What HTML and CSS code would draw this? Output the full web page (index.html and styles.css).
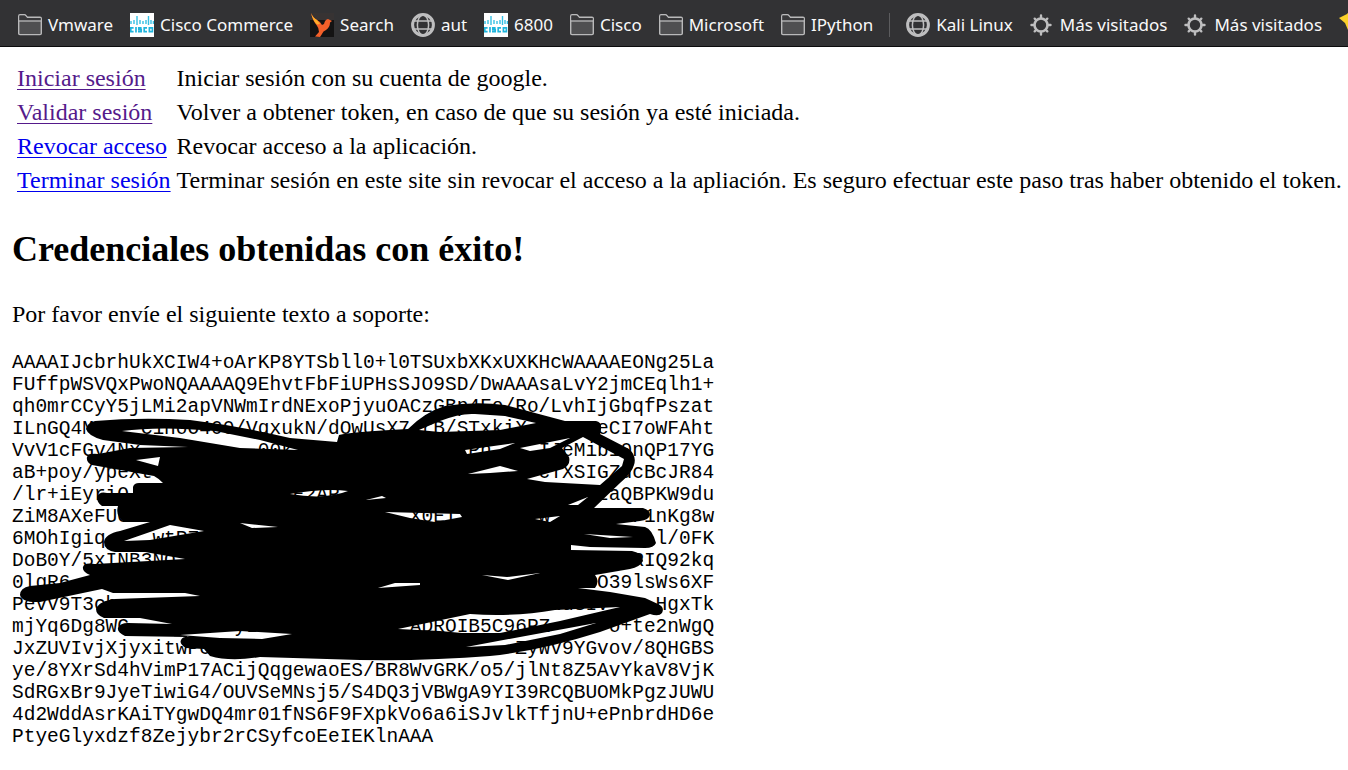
FILE: index.html
```
<!DOCTYPE html>
<html lang="es">
<head>
<meta charset="utf-8">
<title>Credenciales</title>
<link rel="stylesheet" href="styles.css">
</head>
<body>
<svg class="defs" aria-hidden="true">
  <symbol id="folder" viewBox="0 0 24 24">
    <path d="M.7 20.5V3.2Q.7 1.8 2 1.8H6.5Q7.3 1.8 8 2.6L9.3 4.2H22Q23.3 4.2 23.3 5.5V20.5Q23.3 21.6 22 21.6H2Q.7 21.6.7 20.5Z" fill="#4f4f51" stroke="#b9b9ba" stroke-width="1.4"/>
    <path d="M1.4 2.6H6.6L9 5H22.6V7.4H1.4Z" fill="#38383a"/>
    <path d="M1 8H23" stroke="#b9b9ba" stroke-width="1.3"/>
  </symbol>
  <symbol id="globe" viewBox="0 0 24 24">
    <g fill="none" stroke="#bebebf"><circle cx="12" cy="12" r="10.4" stroke-width="3"/>
    <ellipse cx="12" cy="12" rx="5.6" ry="10" stroke-width="1.5"/><path d="M2.5 8H21.5M2.5 16H21.5" stroke-width="1.5"/></g>
  </symbol>
  <symbol id="gear" viewBox="0 0 24 24">
    <g fill="none" stroke="#bebebf" stroke-linecap="round"><circle cx="11" cy="12" r="6.500" stroke-width="2.600"/>
    <path d="M11 2.500V5M11 19V21.500M1.500 12H4M18 12H20.500M4.700 5.700L6 7M16 17L17.300 18.300M4.700 18.300L6 17M16 7L17.300 5.700" stroke-width="2.400"/></g>
  </symbol>
  <symbol id="cisco" viewBox="0 0 24 24">
    <path d="M0 0H24V24H0Z" fill="#fff"/>
    <path d="M1 8V11M4 7V11M7 3V12M10 7V11M13 8V11M16 7V11M18.500 3V12M21 7V11M23.400 8V11" stroke="#35bfe3" stroke-width="1.4"/>
    <path d="M3.6 14.8H.8V18.6H3.6M6 14V19.4M11.600 14.8H8.8V16.7H11.200V18.6H8M17 14.8H14.2V18.6H17M19.4 14.8H22.4V18.6H19.4Z" fill="none" stroke="#1fb4dc" stroke-width="1.7"/>
  </symbol>
  <symbol id="bird" viewBox="0 0 24 24">
    <path d="M0 0H24V24H0Z" fill="#141313"/><path d="M0 0H24V7H0Z" fill="#373333"/>
    <path d="M1 0Q3 5 7 7Q11 9 12 12L14 11Q15 6.500 18 6L22 8L20 9.500Q20 14 16 17Q13 18 12 21L10 24L5 23.500L9 19Q9 15 6.500 12Q3 8 1 0Z" fill="#f4602a"/>
    <path d="M1 0Q3 5 7 7L10 11L7 11.500Q3 8 1 0Z" fill="#ffae28"/>
  </symbol>
  <symbol id="star" viewBox="0 0 24 24"><path d="M0 5L8 1L12 -4V24L6 10Z" fill="#fcd12a"/></symbol>
</svg>

<nav class="bookmarks" aria-label="Marcadores">
  <button class="bookmark"><svg class="icon"><use href="#folder"/></svg>Vmware</button>
  <a class="bookmark" href="#"><svg class="icon"><use href="#cisco"/></svg>Cisco Commerce</a>
  <a class="bookmark" href="#"><svg class="icon"><use href="#bird"/></svg>Search</a>
  <a class="bookmark" href="#"><svg class="icon"><use href="#globe"/></svg>aut</a>
  <a class="bookmark" href="#"><svg class="icon"><use href="#cisco"/></svg>6800</a>
  <button class="bookmark"><svg class="icon"><use href="#folder"/></svg>Cisco</button>
  <button class="bookmark"><svg class="icon"><use href="#folder"/></svg>Microsoft</button>
  <button class="bookmark"><svg class="icon"><use href="#folder"/></svg>IPython</button>
  <span class="separator"></span>
  <a class="bookmark" href="#"><svg class="icon"><use href="#globe"/></svg>Kali Linux</a>
  <button class="bookmark"><svg class="icon"><use href="#gear"/></svg>Más visitados</button>
  <button class="bookmark"><svg class="icon"><use href="#gear"/></svg>Más visitados</button>
  <a class="bookmark" href="#" aria-label="Favoritos"><svg class="icon"><use href="#star"/></svg></a>
</nav>

<main class="content">
  <table class="actions">
    <tr><td><a class="link visited" href="#">Iniciar sesión</a></td><td>Iniciar sesión con su cuenta de google.</td></tr>
    <tr><td><a class="link visited" href="#">Validar sesión</a></td><td>Volver a obtener token, en caso de que su sesión ya esté iniciada.</td></tr>
    <tr><td><a class="link" href="#">Revocar acceso</a></td><td>Revocar acceso a la aplicación.</td></tr>
    <tr><td><a class="link" href="#">Terminar sesión</a></td><td>Terminar sesión en este site sin revocar el acceso a la apliación. Es seguro efectuar este paso tras haber obtenido el token.</td></tr>
  </table>
  <h2 class="title">Credenciales obtenidas con éxito!</h2>
  <p class="hint">Por favor envíe el siguiente texto a soporte:</p>
  <div class="token">
<pre class="token-text">AAAAIJcbrhUkXCIW4+oArKP8YTSbll0+l0TSUxbXKxUXKHcWAAAAEONg25La
FUffpWSVQxPwoNQAAAAQ9EhvtFbFiUPHsSJO9SD/DwAAAsaLvY2jmCEqlh1+
qh0mrCCyY5jLMi2apVNWmIrdNExoPjyuOACzGBp4Fo/Ro/LvhIjGbqfPszat
ILnGQ4M    C1hoO400/VqxukN/dOwUsX7 rB/STxkiX      eCI7oWFAht
VvV1cFGv4Nx          00k               Ph    IJeMib10nQP17YG
aB+poy/ypeXt                                 cTXSIGZdcBcJR84
/lr+iEyriO              E2AP                      zaQBPKW9du
ZiM8AXeFUC                        X0EI       W       F1nKg8w
6MOhIgiq    wtPZ                                       l/0FK
DoB0Y/5xINB3NO                                       RIQ92kq
0lgR6                                             O39lsWs6XF
PeVV9T3ch                                     wuSIV    HgxTk
mjYq6Dg8WC         yLs            ADROIB5C96PZ     o+te2nWgQ
JxZUVIvjXjyxitwPc                          ZyWV9YGvov/8QHGBS
ye/8YXrSd4hVimP17ACijQqgewaoES/BR8WvGRK/o5/jlNt8Z5AvYkaV8VjK
SdRGxBr9JyeTiwiG4/OUVSeMNsj5/S4DQ3jVBWgA9YI39RCQBUOMkPgzJUWU
4d2WddAsrKAiTYgwDQ4mr01fNS6F9FXpkVo6a6iSJvlkTfjnU+ePnbrdHD6e
PtyeGlyxdzf8Zejybr2rCSyfcoEeIEKlnAAA</pre>
    <svg class="scribble" viewBox="12 351 702 396" aria-hidden="true">
      <path fill-rule="evenodd" d="
        M86 428Q87 422 95 420Q140 416 190 419Q240 425 290 437L337 441L339 434Q350 431 408 428
        Q425 411 445 405Q475 400 505 404L565 420H596Q602 421 601 428L600 433L629 448Q637 455 634 464Q632 472 620 482
        L594 507H643Q650 509 650 514Q649 519 640 520L616 523L645 526Q652 528 656 542Q654 547 645 547L590 546L571 544V549
        L632 550Q643 552 643 560Q640 566 630 568L595 574Q600 580 595 587H578L610 591L645 597L658 603Q665 606 662 612Q659 616 650 613
        L600 631Q540 650 490 655Q430 660 360 659L260 656Q230 661 210 655L204 648L186 647Q179 643 181 639Q183 635 190 636
        L125 635Q117 631 118 627Q120 622 128 622L172 623L140 617H104Q96 614 96 608Q99 600 115 598L200 595L185 592H113L102 588
        L40 601Q22 602 20 594Q20 587 30 585L60 582L90 574Q82 571 83 566Q84 561 95 563L185 558L145 551H115Q104 549 104 541
        Q105 533 120 530L150 521H124Q115 515 118 505H102Q97 502 97 496Q99 490 107 492H133V486Q134 482 139 482H163
        Q158 477 154 475L92 464Q86 461 87 456Q89 452 98 453L130 447L188 446L140 444L103 439Q88 435 86 428Z
        M122 430Q160 425 215 430L260 439L298 449L240 447L180 437Z
        M136 459L160 456L158 465Z
        M419 429L440 420Q460 412 475 413L505 415L536 422L500 429L440 431Z
        M583 436L624 458L622 465L600 484L545 481L527 478L563 468Q571 464 569 456L562 447Z
        M465 449L515 442L500 448L467 453Z
        M520 447L570 437L550 447L530 450Z
        M468 473L500 465L518 470L490 472Z
        M124 540L150 531L170 524L204 530L150 539Z
        M240 522L278 526L252 527Z
        M290 493Q325 487 348 490Q325 499 290 493Z
        M366 499L382 495L386 497Z
        M385 511L460 513L462 516L435 521L410 517Z
        M535 518L560 515L550 521Z
        M568 504L588 496L578 504Z
        M584 533L633 536L610 537Z
        M482 574L507 576L540 572L508 579Z
        M378 587L395 582H420V584Z
        M398 628L470 613Q515 616 555 609L620 606L560 620L500 632H462L440 630Z
        M466 646L520 636L596 622L560 633L505 644Z
        M180 634L240 630L292 633L262 638L220 637Z"/>
    </svg>
  </div>
</main>
</body>
</html>
```
FILE: styles.css
```
body {
  margin: 0;
  background: #fff;
  color: #000;
  font-family: "Liberation Serif", serif;
  font-size: 24px;
}

.defs {
  position: absolute;
  width: 0;
  height: 0;
}

.bookmarks {
  display: flex;
  align-items: center;
  gap: 17px;
  padding: 13px 0 9px 18px;
  overflow: hidden;
  background: #323234;
  border-bottom: 1px solid #0c0c0d;
}

.bookmark {
  display: flex;
  flex: none;
  align-items: center;
  gap: 6px;
  padding: 0;
  border: 0;
  background: none;
  color: #f9f9fa;
  font: 17px/24px "Noto Sans", sans-serif;
  text-decoration: none;
  white-space: nowrap;
}

.icon {
  flex: none;
  width: 24px;
  height: 24px;
}

.separator {
  flex: none;
  width: 1px;
  height: 24px;
  margin: 0 -1px;
  background: #5c5c5e;
}

.content {
  padding: 13px 12px 0;
}

.actions {
  border-spacing: 3px;
  line-height: 27px;
}

.actions td {
  padding: 2px 1px 2px 2px;
  white-space: nowrap;
}

.link {
  color: #0000ee;
  text-decoration: underline;
  text-decoration-thickness: 1px;
  text-underline-offset: 3px;
}

.visited {
  color: #551a8b;
}

.title {
  margin: 30px 0;
  font-size: 36px;
  line-height: 40px;
}

.hint {
  margin: 0 0 24px;
  padding-top: 1px;
  line-height: 28px;
}

.token {
  position: relative;
}

.token-text {
  margin: 0;
  font-family: "Liberation Mono", monospace;
  font-size: 13px;
  line-height: normal;
  zoom: 1.5;
}

.scribble {
  position: absolute;
  top: 0;
  left: 0;
  width: 702px;
  height: 396px;
  overflow: visible;
}
```
